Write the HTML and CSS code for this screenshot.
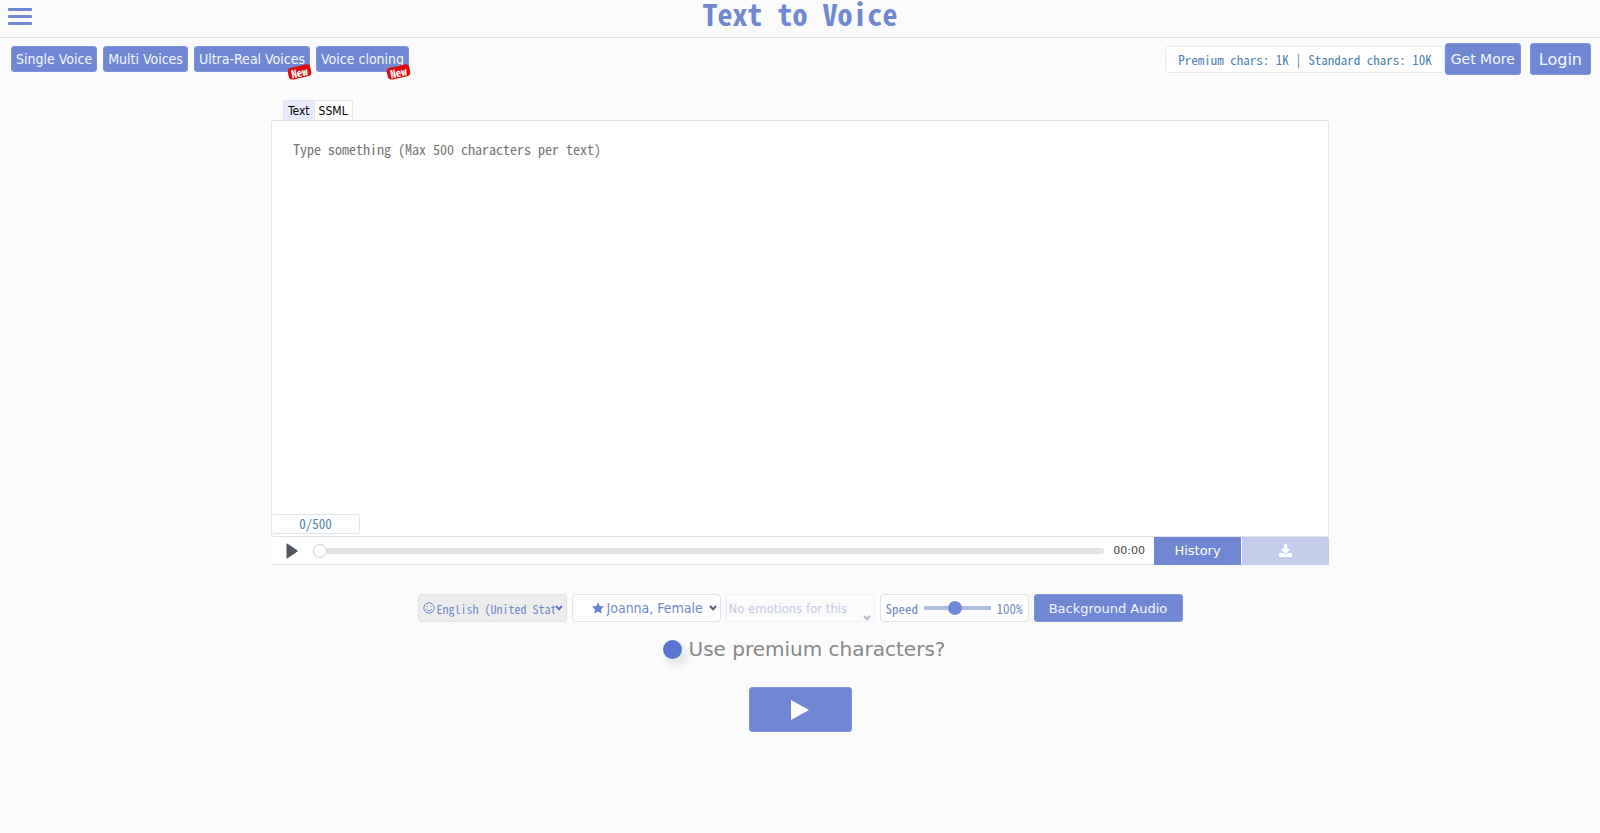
FILE: index.html
```
<!DOCTYPE html>
<html lang="en">
<head>
<meta charset="UTF-8">
<meta name="viewport" content="width=device-width, initial-scale=1">
<title>Text to Voice</title>
<link rel="stylesheet" href="styles.css">
</head>
<body>
<header class="top">
	<button class="menu" type="button" aria-label="Menu"><span></span><span></span><span></span></button>
	<h1>Text to Voice</h1>
</header>

<div class="toolbar">
	<nav class="modes">
		<a class="btn" href="#single">Single Voice</a>
		<a class="btn" href="#multi">Multi Voices</a>
		<a class="btn" href="#ultra">Ultra-Real Voices<span class="new">New</span></a>
		<a class="btn" href="#cloning">Voice cloning<span class="new">New</span></a>
	</nav>
	<div class="account">
		<div class="chars">Premium chars: 1K | Standard chars: 10K</div>
		<button class="btn btn-more" type="button">Get More</button>
		<button class="btn btn-login" type="button">Login</button>
	</div>
</div>

<main>
	<section class="editor">
		<div class="tabs">
			<button class="tab active" type="button">Text</button>
			<button class="tab" type="button">SSML</button>
		</div>
		<div class="box">
			<textarea id="text" aria-label="Text" maxlength="500" placeholder="Type something (Max 500 characters per text)"></textarea>
			<div class="count">0/500</div>
		</div>
		<div class="player">
			<button class="play-small" type="button" aria-label="Play">
				<svg width="12" height="16" viewBox="0 0 12 16"><path d="M0.5 1.3C0.5 0.5 1 0.3 1.6 0.7L11.2 7.2C11.9 7.7 11.9 8.3 11.2 8.8L1.6 15.3C1 15.7 0.5 15.5 0.5 14.7Z"/></svg>
			</button>
			<input class="seek" type="range" min="0" max="100" value="0" aria-label="Seek">
			<span class="time">00:00</span>
			<button class="history" type="button">History</button>
			<button class="download" type="button" aria-label="Download" disabled>
				<svg width="13" height="13" viewBox="0 0 512 512"><path d="M216 0h80c13 0 24 11 24 24v168h88c18 0 27 22 14 34L270 378c-7 8-20 8-27 0L90 226c-12-12-3-34 14-34h88V24c0-13 11-24 24-24zm296 376v112c0 13-11 24-24 24H24c-13 0-24-11-24-24V376c0-13 11-24 24-24h147l49 49c20 20 52 20 72 0l49-49h147c13 0 24 11 24 24z"/></svg>
			</button>
		</div>
	</section>

	<section class="options">
		<div class="option option-lang">
			<svg class="smile" width="12" height="12" viewBox="0 0 12 12"><circle cx="6" cy="6" r="5.2"/><path d="M3.2 6.9C3.8 9.5 8.2 9.5 8.8 6.9M4.2 3.8V5M7.8 3.8V5"/></svg>
			<select aria-label="Language"><option>English (United States)</option></select>
			<svg class="arrow" width="8" height="6" viewBox="0 0 8 6"><path d="M1 1L4 4.2L7 1"/></svg>
		</div>
		<div class="option option-voice">
			<svg class="star" width="12" height="12" viewBox="0 0 24 24"><path d="M12 0.5L15.6 8L24 9.1L17.9 14.9L19.4 23.2L12 19.2L4.6 23.2L6.1 14.9L0 9.1L8.4 8Z"/></svg>
			<select aria-label="Voice"><option>Joanna, Female</option></select>
			<svg class="arrow" width="8" height="6" viewBox="0 0 8 6"><path d="M1 1L4 4.2L7 1"/></svg>
		</div>
		<div class="option option-emotion">
			<select aria-label="Emotion" disabled><option>No emotions for this</option></select>
			<svg class="arrow" width="8" height="6" viewBox="0 0 8 6"><path d="M1 1L4 4.2L7 1"/></svg>
		</div>
		<div class="option option-speed">
			<label for="speed">Speed</label>
			<input id="speed" type="range" min="10" max="210" value="100">
			<output for="speed">100%</output>
		</div>
		<button class="btn btn-audio" type="button">Background Audio</button>
	</section>

	<div class="premium">
		<input id="premium" type="checkbox">
		<label for="premium">Use premium characters?</label>
	</div>

	<button class="btn btn-play" type="button" aria-label="Play text">
		<svg width="18" height="20" viewBox="0 0 18 20"><path d="M0 0L18 10L0 20Z"/></svg>
	</button>
</main>
</body>
</html>
```

FILE: styles.css
```
* {
	box-sizing: border-box;
}

body {
	margin: 0;
	background-color: #fbfbfb;
	color: #4d7fb0;
	font-family: "Noto Sans Mono CJK JP", "Liberation Mono", monospace;
	font-size: 13px;
}

button,
select,
.btn {
	font-family: "DejaVu Sans", sans-serif;
}

button {
	padding: 0;
	border: 0;
	cursor: pointer;
}

.top {
	display: flex;
	position: relative;
	justify-content: center;
	height: 38px;
	border-bottom: 1px solid #dddde3;
}

.top h1 {
	margin: 0;
	color: #7088d3;
	font-size: 30px;
	line-height: 26px;
}

.menu {
	display: flex;
	position: absolute;
	top: 8px;
	left: 8px;
	flex-direction: column;
	justify-content: space-between;
	width: 24px;
	height: 17px;
	background: none;
}

.menu span {
	height: 3px;
	border-radius: 1px;
	background-color: #7088d3;
}

.btn {
	border: 1px solid #7e93d8;
	border-radius: 3px;
	background-color: #7088d3;
	color: #f4f6ff;
	text-align: center;
	text-decoration: none;
}

/* toolbar */
.toolbar {
	display: flex;
	align-items: center;
	justify-content: space-between;
	padding: 5px 9px 0 11px;
}

.modes {
	display: flex;
	gap: 6px;
}

.modes .btn {
	position: relative;
	padding: 0 4px;
	font-family: "DejaVu Sans Condensed", "DejaVu Sans", sans-serif;
	font-size: 14px;
	line-height: 24px;
}

.new {
	position: absolute;
	right: -1px;
	bottom: -7px;
	padding: 0 3px;
	border-radius: 4px;
	background-color: #e00b0b;
	color: #fff;
	font-family: "Noto Sans Mono CJK JP", "Liberation Mono", monospace;
	font-size: 11px;
	font-weight: bold;
	line-height: 12px;
	transform: rotate(-12deg);
}

.account {
	display: flex;
	align-items: center;
}

.chars {
	padding: 0 12px;
	border: 1px solid #e3e7ee;
	border-radius: 4px;
	background-color: #fff;
	line-height: 25px;
}

.btn-more,
.btn-login {
	height: 32px;
	padding: 0 5px;
	font-size: 14px;
}

.btn-login {
	margin-left: 9px;
	padding: 0 8px;
	font-size: 16px;
}

/* editor */
.editor {
	width: calc(66% + 2px);
	margin: 25px auto 0;
}

.tabs {
	display: flex;
	padding-left: 12px;
}

.tab {
	height: 20px;
	padding: 0 4px;
	border: 1px solid #e3e5ee;
	border-bottom: 0;
	background-color: #fff;
	color: #000;
	font-family: "DejaVu Sans Condensed", "DejaVu Sans", sans-serif;
	font-size: 12px;
}

.tab.active {
	background-color: #e8ebfb;
}

.tab + .tab {
	border-left: 0;
}

.box {
	position: relative;
	border: 1px solid #e0e3ea;
	border-radius: 3px;
	background-color: #fff;
}

.box textarea {
	display: block;
	width: 100%;
	height: 415px;
	padding: 18px 21px;
	border: 0;
	outline: 0;
	background: none;
	font-family: inherit;
	font-size: 14px;
	line-height: 20px;
	resize: none;
}

.box textarea::placeholder {
	color: #757575;
}

.count {
	position: absolute;
	bottom: 2px;
	left: 0;
	width: 88px;
	border: 1px solid #e0e3ea;
	border-left: 0;
	border-radius: 3px;
	background-color: #fff;
	line-height: 18px;
	text-align: center;
}

.player {
	display: flex;
	align-items: center;
	height: 28px;
	border-bottom: 1px solid #e0e3ea;
	background-color: #fff;
}

.play-small {
	display: flex;
	margin-left: 15px;
	background: none;
}

.play-small svg {
	fill: #50565d;
}

input[type="range"] {
	margin: 0;
	appearance: none;
	background: none;
}

.player .seek {
	flex: 1;
	height: 16px;
	margin-left: 15px;
}

.seek::-webkit-slider-runnable-track {
	height: 6px;
	border-radius: 3px;
	background-color: #e4e4e4;
}

.seek::-webkit-slider-thumb {
	width: 14px;
	height: 14px;
	margin-top: -4px;
	appearance: none;
	border: 1px solid #d0d0d0;
	border-radius: 50%;
	background-color: #fff;
}

.time {
	margin: 0 9px;
	color: #444;
	font-family: "DejaVu Sans", sans-serif;
	font-size: 11px;
}

.history,
.download {
	width: 87px;
	height: 28px;
	background-color: #7088d3;
	color: #fff;
	font-size: 13px;
}

.download {
	margin-left: 1px;
	background-color: #c3cceb;
}

.download svg {
	display: block;
	margin: 0 auto;
	fill: #fff;
}

/* voice options */
.options {
	display: flex;
	justify-content: center;
	gap: 5px;
	margin-top: 29px;
}

.option,
.btn-audio {
	width: 149px;
	height: 28px;
}

.option {
	display: flex;
	position: relative;
	align-items: center;
	border: 1px solid #dfe4ea;
	border-radius: 4px;
	background-color: #fff;
	color: #7088c0;
}

.option select {
	flex: 1;
	min-width: 0;
	height: 26px;
	padding: 0;
	appearance: none;
	border: 0;
	outline: 0;
	background: none;
	color: #7088c8;
	font-family: "DejaVu Sans Condensed", "DejaVu Sans", sans-serif;
	font-size: 14px;
}

.arrow {
	flex: none;
	margin: 0 3px;
	fill: none;
	stroke: #555b80;
	stroke-width: 2;
}

.option-lang {
	padding-left: 4px;
	background-color: #ededee;
}

.option-lang select {
	font-family: "Noto Sans Mono CJK JP", "Liberation Mono", monospace;
	font-size: 12px;
}

.option-lang .arrow {
	margin-left: 0;
	stroke: #5a72c4;
}

.smile {
	flex: none;
	margin-right: 2px;
	fill: none;
	stroke: #7088c8;
}

.option-voice {
	padding-left: 19px;
}

.star {
	flex: none;
	margin-right: 3px;
	fill: #6681d2;
}

.option-emotion {
	border-color: #eef0f5;
	background: none;
}

.option-emotion select {
	padding-left: 2px;
	color: #c3cbe2;
	opacity: 1;
	font-size: 13px;
}

.option-emotion .arrow {
	align-self: flex-end;
	stroke: #b5bbc9;
}

.option-speed {
	justify-content: space-between;
	padding: 0 5px;
}

.option-speed input {
	width: 67px;
	height: 14px;
}

.option-speed input::-webkit-slider-runnable-track {
	height: 4px;
	background-color: #afbce3;
}

.option-speed input::-webkit-slider-thumb {
	width: 14px;
	height: 14px;
	margin-top: -5px;
	appearance: none;
	border-radius: 50%;
	background-color: #7088d3;
}

.btn-audio {
	font-size: 13px;
}

.premium {
	display: flex;
	align-items: center;
	justify-content: center;
	margin-top: 14px;
	color: #888;
	font-family: "DejaVu Sans", sans-serif;
	font-size: 20px;
	line-height: 26px;
}

.premium input {
	width: 19px;
	height: 19px;
	margin: 0 7px 0 8px;
	appearance: none;
	border-radius: 50%;
	background-color: #5b76cf;
	box-shadow: 4px 6px 12px #ddd;
}

.btn-play {
	display: flex;
	align-items: center;
	justify-content: center;
	width: 103px;
	height: 45px;
	margin: 25px auto 0;
}

.btn-play svg {
	fill: #fff;
}
```
